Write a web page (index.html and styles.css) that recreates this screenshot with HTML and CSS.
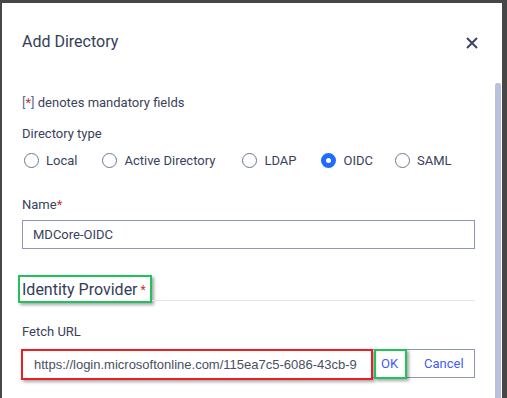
FILE: index.html
```html
<!DOCTYPE html>
<html lang="en">

<head>
  <meta charset="UTF-8" />
  <meta name="viewport" content="width=device-width, initial-scale=1.0" />
  <title>Add Directory</title>
  <link rel="stylesheet" href="styles.css">
</head>

<body>
  <div class="modal">
    <div class="modal-body">
      <div class="modal-header">
        <h2>Add Directory</h2>
        <svg class="close" width="12" height="12" viewBox="0 0 12 12">
          <path d="M1 1 L11 11 M11 1 L1 11" stroke="#3d4660" stroke-width="2" fill="none" />
        </svg>
      </div>

      <p class="hint"><span class="bracket">[</span><span class="req">*</span><span class="bracket">]</span> denotes mandatory fields</p>

      <div class="field">
        <label class="label">Directory type</label>
        <div class="radio-group">
          <span class="radio"><span class="dot"></span>Local</span>
          <span class="radio"><span class="dot"></span>Active Directory</span>
          <span class="radio"><span class="dot"></span>LDAP</span>
          <span class="radio checked"><span class="dot"></span>OIDC</span>
          <span class="radio"><span class="dot"></span>SAML</span>
        </div>
      </div>

      <div class="field">
        <label class="label">Name<span class="req">*</span></label>
        <div class="input">MDCore-OIDC</div>
      </div>

      <div class="section">
        <h3 class="mark-green">Identity Provider<span class="req">*</span></h3>
        <div class="rule"></div>
      </div>

      <div class="field">
        <label class="label">Fetch URL</label>
        <div class="input url-row">
          <span class="url mark-red">https://login.microsoftonline.com/115ea7c5-6086-43cb-9</span>
          <span class="btn ok mark-green">OK</span>
          <span class="btn cancel">Cancel</span>
        </div>
      </div>
    </div>
    <div class="scrollbar"><div class="thumb"></div></div>
  </div>
</body>

</html>
```

FILE: styles.css
```css
* {
  box-sizing: border-box;
  margin: 0;
  padding: 0;
}

body {
  background: #474747;
  font-family: Roboto, 'Liberation Sans', sans-serif;
  color: #38425a;
  height: 398px;
  overflow: hidden;
}

.modal {
  margin: 3px 5px 0 2px;
  height: 395px;
  background: #fff;
  display: flex;
}

.modal-body {
  flex: 1;
  min-width: 0;
  padding: 0 20px 0 20px;
}

.modal-header {
  height: 50px;
  padding-top: 28px;
  display: flex;
  justify-content: space-between;
  align-items: flex-start;
}

h2 {
  font-size: 16px;
  font-weight: 400;
  line-height: 22px;
  color: #343e56;
}

.close {
  margin-top: 6px;
  margin-right: -3px;
}

.hint {
  margin-top: 42px;
  font-size: 13px;
  line-height: 16px;
}

.bracket {
  color: #5b6c99;
}

.req {
  color: #c0392b;
}

.field {
  margin-top: 15px;
}

.label {
  display: block;
  font-size: 13px;
  line-height: 16px;
}

.radio-group {
  display: flex;
  margin-top: 10px;
  height: 16px;
  align-items: center;
  white-space: nowrap;
}

.radio {
  display: flex;
  align-items: center;
  font-size: 13px;
  margin-right: 23px;
}

.radio:nth-child(2) {
  margin-right: 25px;
}

.radio:nth-child(4) {
  margin-right: 20px;
}

.dot {
  width: 15px;
  height: 15px;
  border: 1px solid #6c7892;
  border-radius: 50%;
  margin: 0 7px 0 2px;
  display: inline-block;
}

.radio.checked .dot {
  border: 5px solid #1f6bff;
  background: #fff;
}

.field + .field {
  margin-top: 29px;
}

.input {
  margin-top: 7px;
  height: 29px;
  border: 1px solid #8d97b3;
  font-size: 13px;
  line-height: 27px;
  padding-left: 10px;
  color: #38425a;
}

.section {
  margin-top: 26px;
  display: flex;
  align-items: flex-end;
}

h3 {
  font-size: 16px;
  font-weight: 400;
  line-height: 21px;
  padding: 2px 4px 0 2px;
  margin-left: -4px;
  color: #343e56;
}

h3 .req {
  font-size: 12px;
  margin-left: 3px;
  vertical-align: 1px;
}

.rule {
  flex: 1;
  border-bottom: 1px solid #e1e5ee;
  margin-bottom: 2px;
}

.mark-green {
  border: 2px solid #1fc25b;
  box-shadow: 2px 2px 3px rgba(0, 0, 0, 0.35);
}

.mark-red {
  border: 2px solid #ee1c24;
  box-shadow: 2px 2px 3px rgba(0, 0, 0, 0.35);
}

.section + .field {
  margin-top: 21px;
}

.url-row {
  display: flex;
  padding-left: 0;
  margin-top: 9px;
}

.url {
  width: 352px;
  flex-shrink: 0;
  margin: -1px 0 -1px -2px;
  padding-left: 11px;
  height: 31px;
  line-height: 27px;
  font-family: 'Liberation Sans', Arial, sans-serif;
  white-space: nowrap;
  overflow: hidden;
  color: #4a4f63;
  background: #fff;
}

.btn {
  color: #3f5cf5;
  font-size: 13px;
}

.ok {
  width: 33px;
  flex-shrink: 0;
  margin: -1px 0 -1px 1px;
  height: 30px;
  padding-left: 5px;
  line-height: 26px;
}

.cancel {
  margin-left: 17px;
}

.scrollbar {
  width: 6px;
  padding-top: 80px;
  margin-right: 1px;
}

.thumb {
  height: 100%;
  background: #b9c2dc;
  border-radius: 2px 2px 0 0;
}
```
